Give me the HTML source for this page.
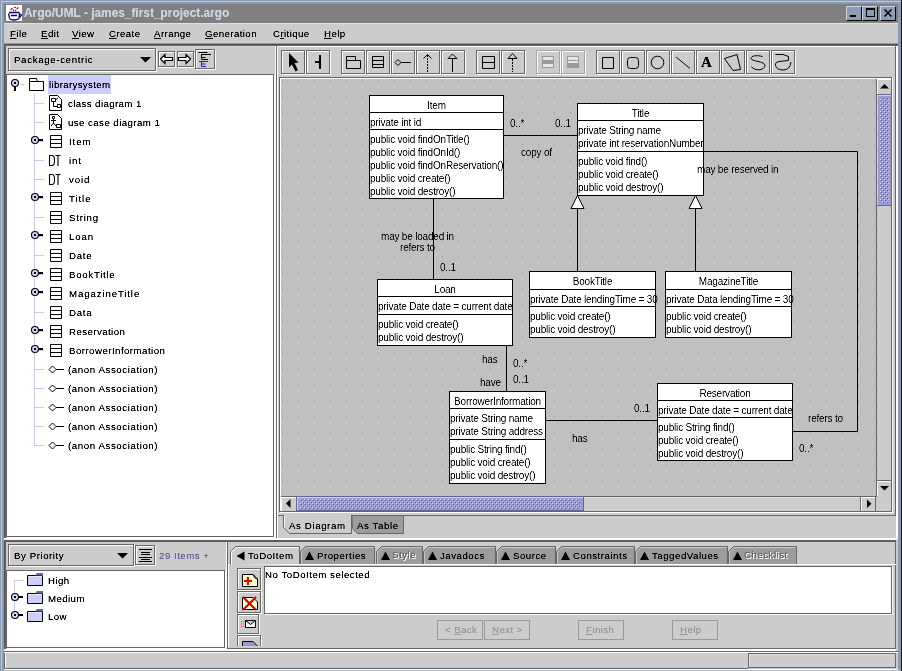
<!DOCTYPE html>
<html><head><meta charset="utf-8">
<style>
*{margin:0;padding:0;box-sizing:border-box}
html,body{width:902px;height:671px;overflow:hidden}
body{background:#8a9bb3;position:relative;font-family:"Liberation Sans",sans-serif;font-size:9.7px;letter-spacing:0.4px;color:#000}
.a{position:absolute}
.t{position:absolute;white-space:pre;line-height:1;filter:url(#tf)}
.f3d{position:absolute;border:1px solid #666;box-shadow:inset 1px 1px #fff,1px 1px #fff}
.ul{text-decoration:underline;text-underline-offset:1px}
svg{position:absolute;left:0;top:0;overflow:visible}
</style></head><body>
<svg width="0" height="0" style="position:absolute"><filter id="tf" x="-5%" y="-20%" width="110%" height="140%"><feComponentTransfer><feFuncA type="linear" slope="1.6" intercept="-0.1"/></feComponentTransfer></filter><filter id="tf2" x="-5%" y="-5%" width="110%" height="110%"><feComponentTransfer><feFuncA type="linear" slope="1.5" intercept="-0.25"/></feComponentTransfer></filter></svg>

<div class="a" style="left:1px;top:1px;width:900px;height:1px;background:#b8cadd"></div>
<div class="a" style="left:1px;top:1px;width:1px;height:669px;background:#b8cadd"></div>
<div class="a" style="left:901px;top:0px;width:1px;height:671px;background:#10141c"></div>
<div class="a" style="left:4px;top:4px;width:894px;height:19px;background:#808080"></div>
<div class="a" style="left:4px;top:23px;width:894px;height:647px;background:#cccccc"></div>
<div class="a" style="left:4px;top:23px;width:894px;height:1px;background:#dde3ea"></div>
<div class="a" style="left:4px;top:669px;width:894px;height:1px;background:#ffffff"></div>
<div class="a" style="left:4px;top:670px;width:897px;height:1px;background:#a9b9cd"></div>
<div class="a" style="left:6px;top:5px;width:16px;height:16px;background:#fff"></div>
<svg width="30" height="30"><g fill="none" stroke="#c01010" stroke-width="1.1"><path d="M10.5 10 L12.5 8 M14 7.5 H16 M13.5 9.5 V11 M16.5 9 L18.5 7.5 M15 10 L16 11"/></g><g fill="none" stroke="#000070" stroke-width="1.3"><path d="M9 12.5 H19.5 M8.5 13.5 L9.5 18 M19.5 13 L19 18 M9 18.5 Q14 21.5 19.5 18.5 M19.5 14 L21.5 15 L19.5 17.5 M11 15.5 H17"/></g></svg>
<div class="t" style="left:24px;top:8px;font-weight:bold;font-size:11.9px;letter-spacing:0;color:#c6d3e0">Argo/UML - james_first_project.argo</div>
<div class="a" style="left:846px;top:6px;width:16px;height:15px;background:#8c9db5;border-top:1px solid #c8d6e6;border-left:1px solid #c8d6e6;border-right:1px solid #000;border-bottom:1px solid #000"></div>
<div class="a" style="left:862px;top:6px;width:16px;height:15px;background:#8c9db5;border-top:1px solid #c8d6e6;border-left:1px solid #c8d6e6;border-right:1px solid #000;border-bottom:1px solid #000"></div>
<div class="a" style="left:880px;top:6px;width:16px;height:15px;background:#8c9db5;border-top:1px solid #c8d6e6;border-left:1px solid #c8d6e6;border-right:1px solid #000;border-bottom:1px solid #000"></div>
<div class="a" style="left:850px;top:15px;width:6px;height:2px;background:#000"></div>
<div class="a" style="left:866px;top:8px;width:9px;height:9px;border:1px solid #000;border-top:2px solid #000"></div>
<svg width="902" height="30"><path d="M884.5 9.5 L891.5 16.5 M891.5 9.5 L884.5 16.5" stroke="#000" stroke-width="1.6"/></svg>
<div class="t" style="left:10px;top:29px;"><span class="ul">F</span>ile</div>
<div class="t" style="left:41px;top:29px;"><span class="ul">E</span>dit</div>
<div class="t" style="left:72px;top:29px;"><span class="ul">V</span>iew</div>
<div class="t" style="left:109px;top:29px;"><span class="ul">C</span>reate</div>
<div class="t" style="left:154px;top:29px;"><span class="ul">A</span>rrange</div>
<div class="t" style="left:205px;top:29px;"><span class="ul">G</span>eneration</div>
<div class="t" style="left:273px;top:29px;">C<span class="ul">r</span>itique</div>
<div class="t" style="left:324px;top:29px;"><span class="ul">H</span>elp</div>
<div class="a" style="left:4px;top:43px;width:894px;height:1px;background:#999"></div>
<div class="a" style="left:4px;top:44px;width:894px;height:1px;background:#555"></div>
<div class="a" style="left:4px;top:45px;width:894px;height:1px;background:#666"></div>
<div class="a" style="left:4px;top:44px;width:1px;height:605px;background:#555"></div>
<div class="a" style="left:5px;top:44px;width:1px;height:605px;background:#666"></div>
<div class="a" style="left:4px;top:651px;width:1px;height:18px;background:#666"></div>
<div class="a" style="left:6px;top:46px;width:269px;height:1px;background:#dcdcdc"></div>
<div class="a" style="left:6px;top:46px;width:1px;height:28px;background:#dcdcdc"></div>
<div class="f3d" style="left:8px;top:48px;width:148px;height:23px;background:#ccc;border-color:#666"></div>
<div class="t" style="left:14px;top:55px;letter-spacing:0.65px">Package-centric</div>
<svg width="902" height="80"><path d="M140 57 H151 L145.5 62.5 Z" fill="#000"/></svg>
<div class="f3d" style="left:158px;top:51px;width:17px;height:16px;background:#ccc;border-color:#666"></div>
<div class="f3d" style="left:177px;top:51px;width:17px;height:16px;background:#ccc;border-color:#666"></div>
<div class="f3d" style="left:195px;top:49px;width:20px;height:20px;background:#ccc;border-color:#666"></div>
<svg width="902" height="80"><path d="M160.5 59 L165 54.5 V57.5 H172.5 V60.5 H165 V63.5 Z" fill="#fff" stroke="#000" stroke-width="1.2"/><path d="M190.5 59 L186 54.5 V57.5 H178.5 V60.5 H186 V63.5 Z" fill="#fff" stroke="#000" stroke-width="1.2"/><path d="M198.5 52.5 H207.5 M201.5 54.5 H211 M201.5 54 V59 M201.5 57.5 H205.5 M201.5 59.5 H208" stroke="#000"/><path d="M199 61.5 H208 M201.5 62 V66.5 M201.5 64 H205.5 M201.5 66.5 H206" stroke="#2222aa"/></svg>
<div class="f3d" style="left:6px;top:74px;width:268px;height:463px;background:#fff;border-color:#666"></div>
<div class="a" style="left:4px;top:538px;width:893px;height:2px;background:#fff"></div>
<div class="a" style="left:4px;top:540px;width:892px;height:2px;background:#5e5e5e"></div>
<div class="a" style="left:48px;top:75px;width:63px;height:19px;background:#ccccff"></div>
<svg width="902" height="671"><path d="M34.5 94 V446" stroke="#c8c8ec"/><path d="M20 84.5 H24" stroke="#c8c8ec"/><circle cx="15" cy="83" r="3.5" fill="#d4d4fa" stroke="#000" stroke-width="1.1"/><rect x="14" y="82" width="2" height="2" fill="#000"/><rect x="14" y="87" width="2" height="4" fill="#000"/><path d="M29.5 81.5 H43.5 V90.5 H29.5 Z M29.5 81.5 V78.5 H36.5 L37.5 81.5" fill="none" stroke="#000"/><path d="M35 103.5 H44" stroke="#c8c8ec"/><path d="M49.5 95.5 H57.5 L61.5 99.5 V110.5 H49.5 Z M57.5 95.5 L61.5 99.5" fill="#fff" stroke="#000"/><path d="M51.5 98.5 H55.5 V101.5 H51.5 Z M53.5 102 V106.5 H57 M57.5 104.5 H60.5 V107.5 H57.5Z M55.5 100 L58 98" fill="none" stroke="#000"/><path d="M35 122.5 H44" stroke="#c8c8ec"/><path d="M49.5 114.5 H57.5 L61.5 118.5 V129.5 H49.5 Z M57.5 114.5 L61.5 118.5" fill="#fff" stroke="#000"/><path d="M52.5 116.5 H54.5 V118.5 H52.5Z M53.5 119 V123 M51 120.5 H56 M53.5 123 L51 126 M53.5 123 L56 126 M56.5 124.5 H60.5 V127.5 H56.5Z" fill="none" stroke="#000"/><path d="M35 141.5 H44" stroke="#c8c8ec"/><circle cx="35" cy="140" r="3.5" fill="#d4d4fa" stroke="#000" stroke-width="1.1"/><rect x="34" y="139" width="2" height="2" fill="#000"/><rect x="39" y="139" width="4" height="2" fill="#000"/><path d="M50.5 135.5 H61.5 V147.5 H50.5 Z M50.5 139.5 H61.5 M50.5 143.5 H61.5" fill="none" stroke="#000"/><path d="M35 160.5 H44" stroke="#c8c8ec"/><path d="M49.5 155.5 V165.5 M49 155.5 H52 Q54.5 155.5 54.5 160 V161 Q54.5 165.5 52 165.5 H49 M55.5 155.5 H60.5 M58 155.5 V166" fill="none" stroke="#000" stroke-width="1.1"/><path d="M35 179.5 H44" stroke="#c8c8ec"/><path d="M49.5 174.5 V184.5 M49 174.5 H52 Q54.5 174.5 54.5 179 V180 Q54.5 184.5 52 184.5 H49 M55.5 174.5 H60.5 M58 174.5 V185" fill="none" stroke="#000" stroke-width="1.1"/><path d="M35 198.5 H44" stroke="#c8c8ec"/><circle cx="35" cy="197" r="3.5" fill="#d4d4fa" stroke="#000" stroke-width="1.1"/><rect x="34" y="196" width="2" height="2" fill="#000"/><rect x="39" y="196" width="4" height="2" fill="#000"/><path d="M50.5 192.5 H61.5 V204.5 H50.5 Z M50.5 196.5 H61.5 M50.5 200.5 H61.5" fill="none" stroke="#000"/><path d="M35 217.5 H44" stroke="#c8c8ec"/><path d="M50.5 211.5 H61.5 V223.5 H50.5 Z M50.5 215.5 H61.5 M50.5 219.5 H61.5" fill="none" stroke="#000"/><path d="M35 236.5 H44" stroke="#c8c8ec"/><circle cx="35" cy="235" r="3.5" fill="#d4d4fa" stroke="#000" stroke-width="1.1"/><rect x="34" y="234" width="2" height="2" fill="#000"/><rect x="39" y="234" width="4" height="2" fill="#000"/><path d="M50.5 230.5 H61.5 V242.5 H50.5 Z M50.5 234.5 H61.5 M50.5 238.5 H61.5" fill="none" stroke="#000"/><path d="M35 255.5 H44" stroke="#c8c8ec"/><path d="M50.5 249.5 H61.5 V261.5 H50.5 Z M50.5 253.5 H61.5 M50.5 257.5 H61.5" fill="none" stroke="#000"/><path d="M35 274.5 H44" stroke="#c8c8ec"/><circle cx="35" cy="273" r="3.5" fill="#d4d4fa" stroke="#000" stroke-width="1.1"/><rect x="34" y="272" width="2" height="2" fill="#000"/><rect x="39" y="272" width="4" height="2" fill="#000"/><path d="M50.5 268.5 H61.5 V280.5 H50.5 Z M50.5 272.5 H61.5 M50.5 276.5 H61.5" fill="none" stroke="#000"/><path d="M35 293.5 H44" stroke="#c8c8ec"/><circle cx="35" cy="292" r="3.5" fill="#d4d4fa" stroke="#000" stroke-width="1.1"/><rect x="34" y="291" width="2" height="2" fill="#000"/><rect x="39" y="291" width="4" height="2" fill="#000"/><path d="M50.5 287.5 H61.5 V299.5 H50.5 Z M50.5 291.5 H61.5 M50.5 295.5 H61.5" fill="none" stroke="#000"/><path d="M35 312.5 H44" stroke="#c8c8ec"/><path d="M50.5 306.5 H61.5 V318.5 H50.5 Z M50.5 310.5 H61.5 M50.5 314.5 H61.5" fill="none" stroke="#000"/><path d="M35 331.5 H44" stroke="#c8c8ec"/><circle cx="35" cy="330" r="3.5" fill="#d4d4fa" stroke="#000" stroke-width="1.1"/><rect x="34" y="329" width="2" height="2" fill="#000"/><rect x="39" y="329" width="4" height="2" fill="#000"/><path d="M50.5 325.5 H61.5 V337.5 H50.5 Z M50.5 329.5 H61.5 M50.5 333.5 H61.5" fill="none" stroke="#000"/><path d="M35 350.5 H44" stroke="#c8c8ec"/><circle cx="35" cy="349" r="3.5" fill="#d4d4fa" stroke="#000" stroke-width="1.1"/><rect x="34" y="348" width="2" height="2" fill="#000"/><rect x="39" y="348" width="4" height="2" fill="#000"/><path d="M50.5 344.5 H61.5 V356.5 H50.5 Z M50.5 348.5 H61.5 M50.5 352.5 H61.5" fill="none" stroke="#000"/><path d="M35 369.5 H44" stroke="#c8c8ec"/><path d="M49 369.5 L52.5 366 L56 369.5 L52.5 373 Z" fill="#fff" stroke="#000"/><path d="M56 369.5 H64" stroke="#000"/><path d="M35 388.5 H44" stroke="#c8c8ec"/><path d="M49 388.5 L52.5 385 L56 388.5 L52.5 392 Z" fill="#fff" stroke="#000"/><path d="M56 388.5 H64" stroke="#000"/><path d="M35 407.5 H44" stroke="#c8c8ec"/><path d="M49 407.5 L52.5 404 L56 407.5 L52.5 411 Z" fill="#fff" stroke="#000"/><path d="M56 407.5 H64" stroke="#000"/><path d="M35 426.5 H44" stroke="#c8c8ec"/><path d="M49 426.5 L52.5 423 L56 426.5 L52.5 430 Z" fill="#fff" stroke="#000"/><path d="M56 426.5 H64" stroke="#000"/><path d="M35 445.5 H44" stroke="#c8c8ec"/><path d="M49 445.5 L52.5 442 L56 445.5 L52.5 449 Z" fill="#fff" stroke="#000"/><path d="M56 445.5 H64" stroke="#000"/></svg>
<div class="t" style="left:49px;top:80px;letter-spacing:0.33px">librarysystem</div>
<div class="t" style="left:68px;top:99px;letter-spacing:0.39px">class diagram 1</div>
<div class="t" style="left:68px;top:118px;letter-spacing:0.43px">use case diagram 1</div>
<div class="t" style="left:69px;top:137px;letter-spacing:0.90px">Item</div>
<div class="t" style="left:69px;top:156px;letter-spacing:0.90px">int</div>
<div class="t" style="left:69px;top:175px;letter-spacing:0.90px">void</div>
<div class="t" style="left:69px;top:194px;letter-spacing:0.90px">Title</div>
<div class="t" style="left:69px;top:213px;letter-spacing:0.76px">String</div>
<div class="t" style="left:69px;top:232px;letter-spacing:0.90px">Loan</div>
<div class="t" style="left:69px;top:251px;letter-spacing:0.73px">Date</div>
<div class="t" style="left:69px;top:270px;letter-spacing:0.71px">BookTitle</div>
<div class="t" style="left:69px;top:289px;letter-spacing:0.86px">MagazineTitle</div>
<div class="t" style="left:69px;top:308px;letter-spacing:0.73px">Data</div>
<div class="t" style="left:69px;top:327px;letter-spacing:0.42px">Reservation</div>
<div class="t" style="left:69px;top:346px;letter-spacing:0.45px">BorrowerInformation</div>
<div class="t" style="left:68px;top:365px;letter-spacing:0.58px">(anon Association)</div>
<div class="t" style="left:68px;top:384px;letter-spacing:0.58px">(anon Association)</div>
<div class="t" style="left:68px;top:403px;letter-spacing:0.58px">(anon Association)</div>
<div class="t" style="left:68px;top:422px;letter-spacing:0.58px">(anon Association)</div>
<div class="t" style="left:68px;top:441px;letter-spacing:0.58px">(anon Association)</div>
<div class="a" style="left:275px;top:46px;width:1px;height:492px;background:#fff"></div>
<div class="a" style="left:276px;top:45px;width:1px;height:493px;background:#666"></div>
<div class="a" style="left:277px;top:46px;width:620px;height:1px;background:#fff"></div>
<div class="a" style="left:277px;top:46px;width:1px;height:492px;background:#fff"></div>
<div class="a" style="left:895px;top:46px;width:1px;height:470px;background:#666"></div>
<div class="a" style="left:896px;top:46px;width:2px;height:492px;background:#fff"></div>
<div class="f3d" style="left:281px;top:50px;width:24px;height:24px;background:#ccc;border-color:#666"></div>
<div class="f3d" style="left:306px;top:50px;width:24px;height:24px;background:#ccc;border-color:#666"></div>
<div class="f3d" style="left:341px;top:50px;width:24px;height:24px;background:#ccc;border-color:#666"></div>
<div class="f3d" style="left:366px;top:50px;width:24px;height:24px;background:#ccc;border-color:#666"></div>
<div class="f3d" style="left:391px;top:50px;width:24px;height:24px;background:#ccc;border-color:#666"></div>
<div class="f3d" style="left:416px;top:50px;width:24px;height:24px;background:#ccc;border-color:#666"></div>
<div class="f3d" style="left:441px;top:50px;width:24px;height:24px;background:#ccc;border-color:#666"></div>
<div class="f3d" style="left:476px;top:50px;width:24px;height:24px;background:#ccc;border-color:#666"></div>
<div class="f3d" style="left:501px;top:50px;width:24px;height:24px;background:#ccc;border-color:#666"></div>
<div class="f3d" style="left:596px;top:50px;width:24px;height:24px;background:#ccc;border-color:#666"></div>
<div class="f3d" style="left:621px;top:50px;width:24px;height:24px;background:#ccc;border-color:#666"></div>
<div class="f3d" style="left:646px;top:50px;width:24px;height:24px;background:#ccc;border-color:#666"></div>
<div class="f3d" style="left:671px;top:50px;width:24px;height:24px;background:#ccc;border-color:#666"></div>
<div class="f3d" style="left:696px;top:50px;width:24px;height:24px;background:#ccc;border-color:#666"></div>
<div class="f3d" style="left:721px;top:50px;width:24px;height:24px;background:#ccc;border-color:#666"></div>
<div class="f3d" style="left:746px;top:50px;width:24px;height:24px;background:#ccc;border-color:#666"></div>
<div class="f3d" style="left:771px;top:50px;width:24px;height:24px;background:#ccc;border-color:#666"></div>
<div class="a" style="left:536px;top:50px;width:24px;height:24px;border:1px solid #a4a4a4;box-shadow:inset 1px 1px #fff,1px 1px #fff"></div>
<div class="a" style="left:561px;top:50px;width:24px;height:24px;border:1px solid #a4a4a4;box-shadow:inset 1px 1px #fff,1px 1px #fff"></div>
<svg width="902" height="80" fill="none" stroke="#000">
<path d="M289 53 L298.5 62.5 L294.5 63 L298 70 L295.5 71.5 L292 64.5 L289 67.5 Z" fill="#000" stroke="none"/>
<path d="M320 55 V69 M315 62 H320" stroke-width="2"/>
<path d="M346.5 60.5 H360.5 V68.5 H346.5 Z M346.5 60.5 V56.5 H355.5 V60.5"/>
<path d="M372.5 56.5 H383.5 V67.5 H372.5 Z M372.5 60.5 H383.5 M372.5 64.5 H383.5"/>
<path d="M395 62.5 L398 59.5 L401 62.5 L398 65.5 Z M401 62.5 H411"/>
<path d="M427.5 55 V72" stroke-dasharray="2 1"/><path d="M423.5 58.5 L427.5 54.5 L431.5 58.5"/>
<path d="M452.5 58 V72"/><path d="M452.5 54 L457 58.5 H448 Z"/>
<path d="M482.5 56.5 H494.5 V68.5 H482.5 Z M482.5 62.5 H494.5"/>
<path d="M512.5 59 V72" stroke-dasharray="2 1"/><path d="M512.5 53.5 L517 58.5 H508 Z"/>
<rect x="542.5" y="56.5" width="11" height="11" fill="#e6e6e6" stroke="#999"/><rect x="543" y="60" width="10" height="4" fill="#999" stroke="none"/><path d="M542.5 60.5 H553.5 M542.5 63.5 H553.5" stroke="#999"/>
<rect x="567.5" y="56.5" width="11" height="11" fill="#e6e6e6" stroke="#999"/><rect x="568" y="64" width="10" height="3" fill="#999" stroke="none"/><path d="M567.5 60.5 H578.5 M567.5 63.5 H578.5" stroke="#999"/>
<path d="M602.5 57.5 H613.5 V68.5 H602.5 Z"/>
<rect x="627.5" y="57.5" width="11" height="11" rx="3"/>
<circle cx="657.5" cy="62.5" r="6.3"/>
<path d="M676 57 L690 68.5"/>
<path d="M724.5 58.5 L737 54.5 L740.5 69.5 L733 70.5 Z" stroke-linejoin="round"/>
<path d="M762.5 56.5 C757 55 751 55.5 751 58.5 C751 61.5 765 61 765 65.5 C765 70.5 754 71.5 751.5 66.5"/>
<path d="M775.5 54.5 H783 L788.5 56.5 V60.5 L779 61.5 Q775 62 775.5 65.5 Q777 70 783 70 Q790 70 791 62"/>
</svg>
<div class="t" style="left:701px;top:55px;font-family:'Liberation Serif';font-weight:bold;font-size:15px;letter-spacing:0">A</div>
<div class="f3d" style="left:279px;top:77px;width:613px;height:435px;background:#ccc;border-color:#666"></div>
<svg width="902" height="671"><defs><pattern id="g" x="0" y="0" width="16" height="16" patternUnits="userSpaceOnUse"><rect x="10" y="0" width="1" height="1" fill="#9c9c9c"/></pattern>
<pattern id="bp" x="0" y="3" width="4" height="4" patternUnits="userSpaceOnUse"><rect x="0" y="0" width="1" height="1" fill="#d8d8ff"/><rect x="2" y="2" width="1" height="1" fill="#d8d8ff"/><rect x="1" y="1" width="1" height="1" fill="#555588"/><rect x="3" y="3" width="1" height="1" fill="#555588"/></pattern></defs>
<rect x="281" y="79" width="595" height="417" fill="#c0c0c0"/><rect x="281" y="79" width="595" height="417" fill="url(#g)"/>
<rect x="876" y="79" width="15" height="432" fill="#cccccc"/><rect x="876" y="79" width="1" height="417" fill="#666"/>
<rect x="877" y="79" width="14" height="1" fill="#fff"/><rect x="877" y="79" width="1" height="15" fill="#fff"/>
<path d="M880 88.5 H889 L884.5 84 Z" fill="#000"/>
<rect x="877" y="94" width="14" height="112" fill="#9c9cd0"/><rect x="877" y="94" width="14" height="1" fill="#666699"/><rect x="877" y="205" width="14" height="1" fill="#666699"/>
<rect x="877" y="95" width="1" height="110" fill="#ccccff"/><rect x="878" y="95" width="13" height="1" fill="#ccccff"/>
<rect x="880" y="98" width="9" height="105" fill="url(#bp)"/>
<rect x="877" y="480" width="14" height="1" fill="#666"/><rect x="877" y="481" width="14" height="1" fill="#fff"/><rect x="877" y="481" width="1" height="15" fill="#fff"/>
<path d="M880 486 H889 L884.5 490.5 Z" fill="#000"/>
<rect x="281" y="496" width="610" height="15" fill="#cccccc"/><rect x="281" y="496" width="596" height="1" fill="#666"/>
<rect x="281" y="497" width="15" height="1" fill="#fff"/><rect x="281" y="497" width="1" height="14" fill="#fff"/>
<path d="M290.5 499 V508 L286 503.5 Z" fill="#000"/>
<rect x="584" y="497" width="276" height="1" fill="#e4e4e4"/>
<rect x="296" y="496" width="288" height="15" fill="#9c9cd0"/><rect x="296" y="496" width="288" height="1" fill="#666699"/><rect x="296" y="496" width="1" height="15" fill="#666699"/><rect x="583" y="496" width="1" height="15" fill="#666699"/><rect x="296" y="510" width="288" height="1" fill="#666699"/>
<rect x="297" y="497" width="286" height="1" fill="#ccccff"/><rect x="297" y="497" width="1" height="13" fill="#ccccff"/>
<rect x="300" y="499" width="280" height="10" fill="url(#bp)"/>
<rect x="860" y="496" width="1" height="15" fill="#666"/><rect x="861" y="497" width="14" height="1" fill="#fff"/><rect x="861" y="497" width="1" height="14" fill="#fff"/><rect x="875" y="496" width="1" height="15" fill="#666"/>
<path d="M867 499.5 V508 L871.5 503.75 Z" fill="#000"/>
</svg>
<svg width="902" height="671"><path d="M278 515.5 H283.5 M403.5 515.5 H896" stroke="#666"/><path d="M352 515.5 H403.5 V533.5 H357.5 L352.5 528.5 Z" fill="#9c9c9c" stroke="#666"/><path d="M283.5 515 V527.5 L289.5 533.5 H351.5 V515" fill="#cccccc" stroke="#666"/><path d="M284.5 516 V527" stroke="#fff"/></svg>
<div class="t" style="left:289px;top:521px;letter-spacing:0.60px">As Diagram</div>
<div class="t" style="left:357px;top:521px;letter-spacing:0.60px">As Table</div>
<svg width="902" height="671" font-family="Liberation Sans" font-size="10" letter-spacing="-0.2"><path d="M503 135.5 H577 M433.5 198 V279 M577.5 208 V271 M695.5 208 V271 M506.5 345 V391 M545 420.5 H657 M792 431.5 H857.5 V151.5 H703" fill="none" stroke="#000"/><path d="M577.5 195.5 L584 208.5 H571 Z M695.5 195.5 L702 208.5 H689 Z" fill="#fff" stroke="#000"/><rect x="369.5" y="95.5" width="134" height="103" fill="#fff" stroke="#000"/><path d="M369 112.5 H504 M369 129.5 H504" stroke="#000"/><rect x="577.5" y="103.5" width="126" height="92" fill="#fff" stroke="#000"/><path d="M577 120.5 H704 M577 151.5 H704" stroke="#000"/><rect x="377.5" y="279.5" width="135" height="66" fill="#fff" stroke="#000"/><path d="M377 296.5 H513 M377 314.5 H513" stroke="#000"/><rect x="529.5" y="271.5" width="126" height="66" fill="#fff" stroke="#000"/><path d="M529 289.5 H656 M529 306.5 H656" stroke="#000"/><rect x="665.5" y="271.5" width="126" height="66" fill="#fff" stroke="#000"/><path d="M665 289.5 H792 M665 306.5 H792" stroke="#000"/><rect x="449.5" y="391.5" width="96" height="92" fill="#fff" stroke="#000"/><path d="M449 408.5 H546 M449 439.5 H546" stroke="#000"/><rect x="657.5" y="383.5" width="135" height="77" fill="#fff" stroke="#000"/><path d="M657 400.5 H793 M657 417.5 H793" stroke="#000"/><g filter="url(#tf2)"><text x="436.5" y="109" text-anchor="middle">Item</text><text x="370" y="125.5">private int id</text><text x="370" y="142.5">public void findOnTitle()</text><text x="370" y="155.5">public void findOnId()</text><text x="370" y="168.5">public void findOnReservation()</text><text x="370" y="181.5">public void create()</text><text x="370" y="194.5">public void destroy()</text><text x="640.5" y="117" text-anchor="middle">Title</text><text x="578" y="133.5">private String name</text><text x="578" y="146.5">private int reservationNumber</text><text x="578" y="164.5">public void find()</text><text x="578" y="177.5">public void create()</text><text x="578" y="190.5">public void destroy()</text><text x="445.0" y="293" text-anchor="middle">Loan</text><text x="378" y="309.5">private Date date = current date</text><text x="378" y="327.5">public void create()</text><text x="378" y="340.5">public void destroy()</text><text x="592.5" y="285" text-anchor="middle">BookTitle</text><text x="530" y="302.5">private Date lendingTime = 30</text><text x="530" y="319.5">public void create()</text><text x="530" y="332.5">public void destroy()</text><text x="728.5" y="285" text-anchor="middle">MagazineTitle</text><text x="666" y="302.5">private Data lendingTime = 30</text><text x="666" y="319.5">public void create()</text><text x="666" y="332.5">public void destroy()</text><text x="497.5" y="405" text-anchor="middle">BorrowerInformation</text><text x="450" y="421.5">private String name</text><text x="450" y="434.5">private String address</text><text x="450" y="452.5">public String find()</text><text x="450" y="465.5">public void create()</text><text x="450" y="478.5">public void destroy()</text><text x="725.0" y="397" text-anchor="middle">Reservation</text><text x="658" y="413.5">private Date date = current date</text><text x="658" y="430.5">public String find()</text><text x="658" y="443.5">public void create()</text><text x="658" y="456.5">public void destroy()</text><text x="510" y="127">0..*</text><text x="555" y="127">0..1</text><text x="521" y="156">copy of</text><text x="381" y="240">may be loaded in</text><text x="400" y="251">refers to</text><text x="440" y="271">0..1</text><text x="482" y="363">has</text><text x="513" y="367">0..*</text><text x="480" y="386">have</text><text x="513" y="383">0..1</text><text x="572" y="442">has</text><text x="634" y="412">0..1</text><text x="808" y="422">refers to</text><text x="799" y="452">0..*</text><text x="697" y="173">may be reserved in</text></g></svg>
<div class="f3d" style="left:8px;top:544px;width:126px;height:22px;background:#ccc;border-color:#666"></div>
<div class="t" style="left:14px;top:551px;letter-spacing:0.55px">By Priority</div>
<svg width="902" height="671"><path d="M117 553 H128 L122.5 558.5 Z" fill="#000"/></svg>
<div class="f3d" style="left:135px;top:545px;width:20px;height:20px;background:#ccc;border-color:#666"></div>
<svg width="902" height="671"><path d="M139 549.5 H152 M141 552.5 H150 M141 554.5 H150 M139 557.5 H152 M141 559.5 H150 M139 561.5 H152" stroke="#000"/></svg>
<div class="t" style="left:159px;top:551px;color:#666699;letter-spacing:0.50px">29 Items +</div>
<div class="f3d" style="left:6px;top:570px;width:219px;height:78px;background:#fff;border-color:#666"></div>
<svg width="902" height="671"><path d="M14.5 580 V613 M15 580.5 H24" stroke="#c8c8ec"/><path d="M27.5 575.5 H42.5 V585.5 H27.5 Z" fill="#ccccff" stroke="#000"/><path d="M35 575.5 L37 573 H43 V575.5 Z" fill="#666699"/><path d="M28 576.5 H42" stroke="#fff" stroke-opacity="0.6"/><circle cx="15" cy="597" r="3.5" fill="#d4d4fa" stroke="#000" stroke-width="1.1"/><rect x="14" y="596" width="2" height="2" fill="#000"/><rect x="19" y="596" width="4" height="2" fill="#000"/><path d="M27.5 593.5 H42.5 V603.5 H27.5 Z" fill="#ccccff" stroke="#000"/><path d="M35 593.5 L37 591 H43 V593.5 Z" fill="#666699"/><path d="M28 594.5 H42" stroke="#fff" stroke-opacity="0.6"/><circle cx="15" cy="615" r="3.5" fill="#d4d4fa" stroke="#000" stroke-width="1.1"/><rect x="14" y="614" width="2" height="2" fill="#000"/><rect x="19" y="614" width="4" height="2" fill="#000"/><path d="M27.5 611.5 H42.5 V621.5 H27.5 Z" fill="#ccccff" stroke="#000"/><path d="M35 611.5 L37 609 H43 V611.5 Z" fill="#666699"/><path d="M28 612.5 H42" stroke="#fff" stroke-opacity="0.6"/></svg>
<div class="t" style="left:48px;top:576px;">High</div>
<div class="t" style="left:48px;top:594px;">Medium</div>
<div class="t" style="left:48px;top:612px;">Low</div>
<div class="a" style="left:226px;top:542px;width:1px;height:108px;background:#fff"></div>
<div class="a" style="left:227px;top:541px;width:1px;height:109px;background:#666"></div>
<div class="a" style="left:895px;top:542px;width:1px;height:106px;background:#666"></div>
<div class="a" style="left:228px;top:648px;width:668px;height:1px;background:#666"></div>
<div class="a" style="left:228px;top:564px;width:668px;height:1px;background:#fff"></div>
<div class="a" style="left:228px;top:564px;width:1px;height:83px;background:#fff"></div>
<svg width="902" height="671"><path d="M300.5 564 V551.5 L305.5 546.5 H374.5 V564" fill="#9c9c9c" stroke="#666"/><path d="M301.5 564 V552 L306 547.5 H373.5" fill="none" stroke="#c8c8c8"/><path d="M376.5 564 V551.5 L381.5 546.5 H422.5 V564" fill="#9c9c9c" stroke="#666"/><path d="M377.5 564 V552 L382 547.5 H421.5" fill="none" stroke="#c8c8c8"/><path d="M423.5 564 V551.5 L428.5 546.5 H495.5 V564" fill="#9c9c9c" stroke="#666"/><path d="M424.5 564 V552 L429 547.5 H494.5" fill="none" stroke="#c8c8c8"/><path d="M496.5 564 V551.5 L501.5 546.5 H555.5 V564" fill="#9c9c9c" stroke="#666"/><path d="M497.5 564 V552 L502 547.5 H554.5" fill="none" stroke="#c8c8c8"/><path d="M556.5 564 V551.5 L561.5 546.5 H634.5 V564" fill="#9c9c9c" stroke="#666"/><path d="M557.5 564 V552 L562 547.5 H633.5" fill="none" stroke="#c8c8c8"/><path d="M635.5 564 V551.5 L640.5 546.5 H727.5 V564" fill="#9c9c9c" stroke="#666"/><path d="M636.5 564 V552 L641 547.5 H726.5" fill="none" stroke="#c8c8c8"/><path d="M728.5 564 V551.5 L733.5 546.5 H796.5 V564" fill="#9c9c9c" stroke="#666"/><path d="M729.5 564 V552 L734 547.5 H795.5" fill="none" stroke="#c8c8c8"/><path d="M230.5 565 V551.5 L235.5 546.5 H299.5 V564" fill="#cccccc" stroke="#666"/><path d="M231.5 565 V552 L236 547.5 H298.5" fill="none" stroke="#fff"/><path d="M236.5 556 L244.5 551.5 V560.5 Z" fill="#000"/><path d="M305 560 L309.5 551.5 L314 560 Z" fill="#000"/><path d="M381 560 L385.5 551.5 L390 560 Z" fill="#000"/><path d="M428 560 L432.5 551.5 L437 560 Z" fill="#000"/><path d="M501 560 L505.5 551.5 L510 560 Z" fill="#000"/><path d="M561 560 L565.5 551.5 L570 560 Z" fill="#000"/><path d="M640 560 L644.5 551.5 L649 560 Z" fill="#000"/><path d="M733 560 L737.5 551.5 L742 560 Z" fill="#000"/></svg>
<div class="t" style="left:248px;top:551px;letter-spacing:0.50px">ToDoItem</div>
<div class="t" style="left:317px;top:551px;letter-spacing:0.50px">Properties</div>
<div class="t" style="left:393px;top:551px;color:#fff;letter-spacing:0.50px">Style</div>
<div class="t" style="left:392px;top:550px;color:#666;letter-spacing:0.50px">Style</div>
<div class="t" style="left:440px;top:551px;letter-spacing:0.50px">Javadocs</div>
<div class="t" style="left:513px;top:551px;letter-spacing:0.50px">Source</div>
<div class="t" style="left:573px;top:551px;letter-spacing:0.50px">Constraints</div>
<div class="t" style="left:652px;top:551px;letter-spacing:0.50px">TaggedValues</div>
<div class="t" style="left:745px;top:551px;color:#fff;letter-spacing:0.50px">Checklist</div>
<div class="t" style="left:744px;top:550px;color:#666;letter-spacing:0.50px">Checklist</div>
<div class="f3d" style="left:264px;top:566px;width:628px;height:48px;background:#fff;border-color:#666"></div>
<div class="t" style="left:265px;top:570px;letter-spacing:0.50px">No ToDoItem selected</div>
<div class="a" style="left:228px;top:565px;width:667px;height:81px;overflow:hidden">
<div class="f3d" style="left:9px;top:3px;width:24px;height:22px;background:#ccc"></div>
<div class="f3d" style="left:9px;top:26px;width:24px;height:22px;background:#ccc"></div>
<div class="f3d" style="left:9px;top:49px;width:22px;height:20px;background:#ccc"></div>
<div class="f3d" style="left:9px;top:70px;width:24px;height:22px;background:#ccc"></div>
<svg width="40" height="90" style="left:0;top:0"><g transform="translate(-228,-565)"><path d="M242.5 574.5 H253 L257.5 579 V586.5 H242.5 Z" fill="#ffffcc" stroke="#000"/><path d="M253 574.5 L255 578 L257.5 579" fill="none" stroke="#000"/><path d="M248 577 V585 M244 581 H252" stroke="#ee0000" stroke-width="2"/><path d="M242.5 597.5 H253 L257.5 602 V609.5 H242.5 Z" fill="#ffffcc" stroke="#000"/><path d="M243 597 L256 610 M256 597 L243 610" stroke="#cc0000" stroke-width="2"/><path d="M245.5 620.5 H255.5 V627.5 H245.5 Z M245.5 620.5 L250.5 624.5 L255.5 620.5" fill="#fff" stroke="#000"/><path d="M241 621.5 H244 M241 624 H244 M241 626.5 H244" stroke="#e04040" stroke-dasharray="1 1"/><path d="M242.5 641.5 H253 L257.5 646 V652 H242.5 Z" fill="#9999cc" stroke="#000"/></g></svg>
</div>
<div class="a" style="left:437px;top:620px;width:46px;height:20px;border:1px solid #999"></div>
<div class="t" style="left:445px;top:625px;color:#999">&lt; <span class="ul">B</span>ack</div>
<div class="a" style="left:484px;top:620px;width:46px;height:20px;border:1px solid #999"></div>
<div class="t" style="left:492px;top:625px;color:#999"><span class="ul">N</span>ext &gt;</div>
<div class="a" style="left:578px;top:620px;width:46px;height:20px;border:1px solid #999"></div>
<div class="t" style="left:586px;top:625px;color:#999"><span class="ul">F</span>inish</div>
<div class="a" style="left:672px;top:620px;width:46px;height:20px;border:1px solid #999"></div>
<div class="t" style="left:680px;top:625px;color:#999"><span class="ul">H</span>elp</div>
<div class="a" style="left:4px;top:649px;width:892px;height:2px;background:#fff"></div>
<div class="a" style="left:4px;top:651px;width:894px;height:1px;background:#666"></div>
<div class="a" style="left:4px;top:652px;width:894px;height:1px;background:#fff"></div>
<div class="a" style="left:5px;top:652px;width:1px;height:17px;background:#fff"></div>
<div class="a" style="left:4px;top:668px;width:744px;height:1px;background:#666"></div>
<div class="a" style="left:4px;top:669px;width:894px;height:1px;background:#fff"></div>
<div class="a" style="left:748px;top:653px;width:148px;height:15px;border:1px solid #666;box-shadow:inset 1px 1px #e0e0e0"></div>
</body></html>
